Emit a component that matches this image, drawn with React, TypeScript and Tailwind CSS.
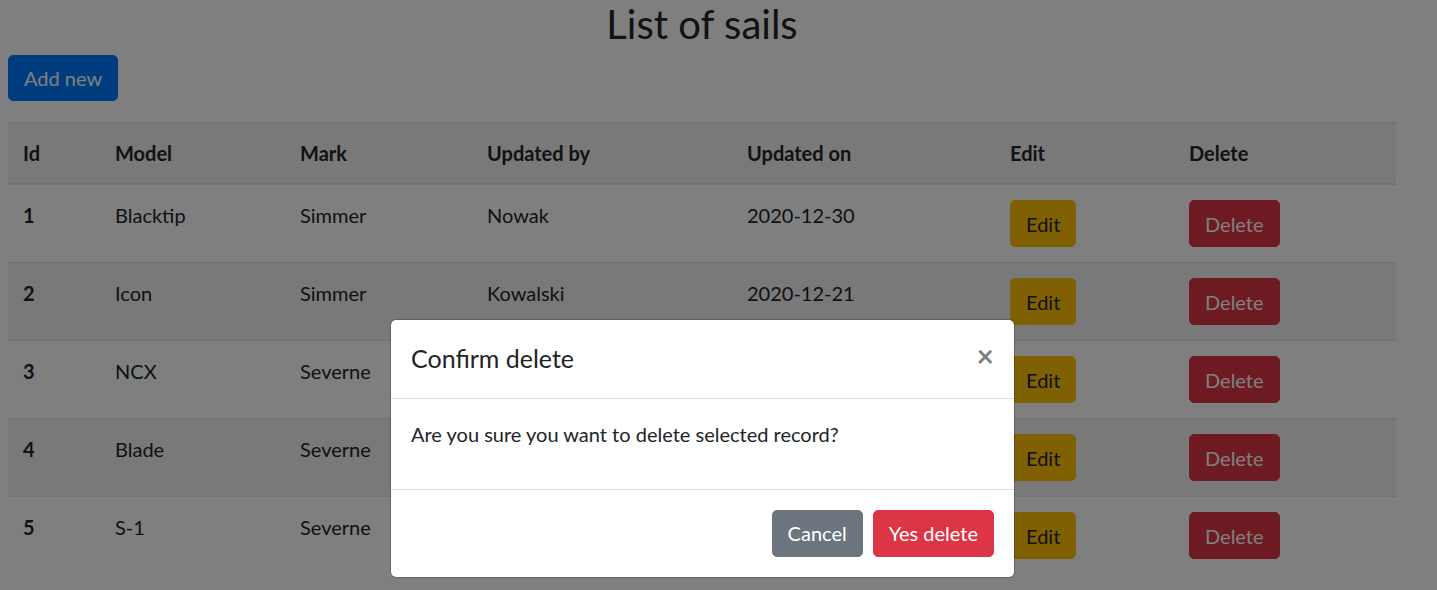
import React from "react";

const rows = [
  { id: 1, model: "Blacktip", mark: "Simmer", by: "Nowak", on: "2020-12-30" },
  { id: 2, model: "Icon", mark: "Simmer", by: "Kowalski", on: "2020-12-21" },
  { id: 3, model: "NCX", mark: "Severne", by: "Nowak", on: "2020-12-20" },
  { id: 4, model: "Blade", mark: "Severne", by: "Nowak", on: "2020-12-19" },
  { id: 5, model: "S-1", mark: "Severne", by: "Nowak", on: "2020-12-18" },
];

export default function App() {
  return (
    <div
      className="relative h-[590px] overflow-hidden bg-white text-[#212529]"
      style={{ fontFamily: '"Segoe UI", Lato, "Open Sans", sans-serif' }}
    >
      <div className="ml-2 w-[1388px]">
        <h2 className="mb-[7px] text-center text-[40px] font-normal leading-[48px]">List of sails</h2>
        <button className="rounded-[5px] border border-[#007bff] bg-[#007bff] px-[15px] py-[7px] text-[20px] leading-[30px] text-white">
          Add new
        </button>
        <table className="mt-[21px] w-full table-fixed border-collapse text-[20px] leading-[30px]">
          <colgroup>
            <col className="w-[92px]" />
            <col className="w-[185px]" />
            <col className="w-[187px]" />
            <col className="w-[260px]" />
            <col className="w-[263px]" />
            <col className="w-[179px]" />
            <col className="w-[222px]" />
          </colgroup>
          <thead>
            <tr className="bg-black/5">
              {["Id", "Model", "Mark", "Updated by", "Updated on", "Edit", "Delete"].map((h) => (
                <th
                  key={h}
                  className="border-t border-b-2 border-[#dee2e6] p-[15px] text-left align-bottom font-bold"
                >
                  {h}
                </th>
              ))}
            </tr>
          </thead>
          <tbody>
            {rows.map((r, i) => (
              <tr key={r.id} className={i % 2 === 1 ? "bg-black/5" : ""}>
                <th className="border-t border-[#dee2e6] p-[15px] text-left align-top font-bold">{r.id}</th>
                <td className="border-t border-[#dee2e6] p-[15px] align-top">{r.model}</td>
                <td className="border-t border-[#dee2e6] p-[15px] align-top">{r.mark}</td>
                <td className="border-t border-[#dee2e6] p-[15px] align-top">{r.by}</td>
                <td className="border-t border-[#dee2e6] p-[15px] align-top">{r.on}</td>
                <td className="border-t border-[#dee2e6] p-[15px] align-top">
                  <button className="rounded-[5px] border border-[#ffc107] bg-[#ffc107] px-[15px] py-[7.5px] text-[20px] leading-[30px] text-[#212529]">
                    Edit
                  </button>
                </td>
                <td className="border-t border-[#dee2e6] p-[15px] align-top">
                  <button className="rounded-[5px] border border-[#dc3545] bg-[#dc3545] px-[15px] py-[7.5px] text-[20px] leading-[30px] text-white">
                    Delete
                  </button>
                </td>
              </tr>
            ))}
          </tbody>
        </table>
      </div>

      <div className="absolute inset-0 bg-black/50" />

      <div className="absolute left-[390px] top-[319px] w-[625px] rounded-[6px] border border-black/20 bg-white bg-clip-padding">
        <div className="flex items-start justify-between border-b border-[#dee2e6] p-5">
          <h5 className="text-[25px] font-normal leading-[37.5px]">Confirm delete</h5>
          <button className="-m-5 ml-auto p-5 text-[30px] font-bold leading-none text-black opacity-50">×</button>
        </div>
        <div className="p-5">
          <p className="mb-5 text-[20px] leading-[30px]">Are you sure you want to delete selected record?</p>
        </div>
        <div className="flex items-center justify-end border-t border-[#dee2e6] p-[15px]">
          <button className="m-[5px] rounded-[5px] border border-[#6c757d] bg-[#6c757d] px-[15px] py-[7.5px] text-[20px] leading-[30px] text-white">
            Cancel
          </button>
          <button className="m-[5px] rounded-[5px] border border-[#dc3545] bg-[#dc3545] px-[15px] py-[7.5px] text-[20px] leading-[30px] text-white">
            Yes delete
          </button>
        </div>
      </div>
    </div>
  );
}
